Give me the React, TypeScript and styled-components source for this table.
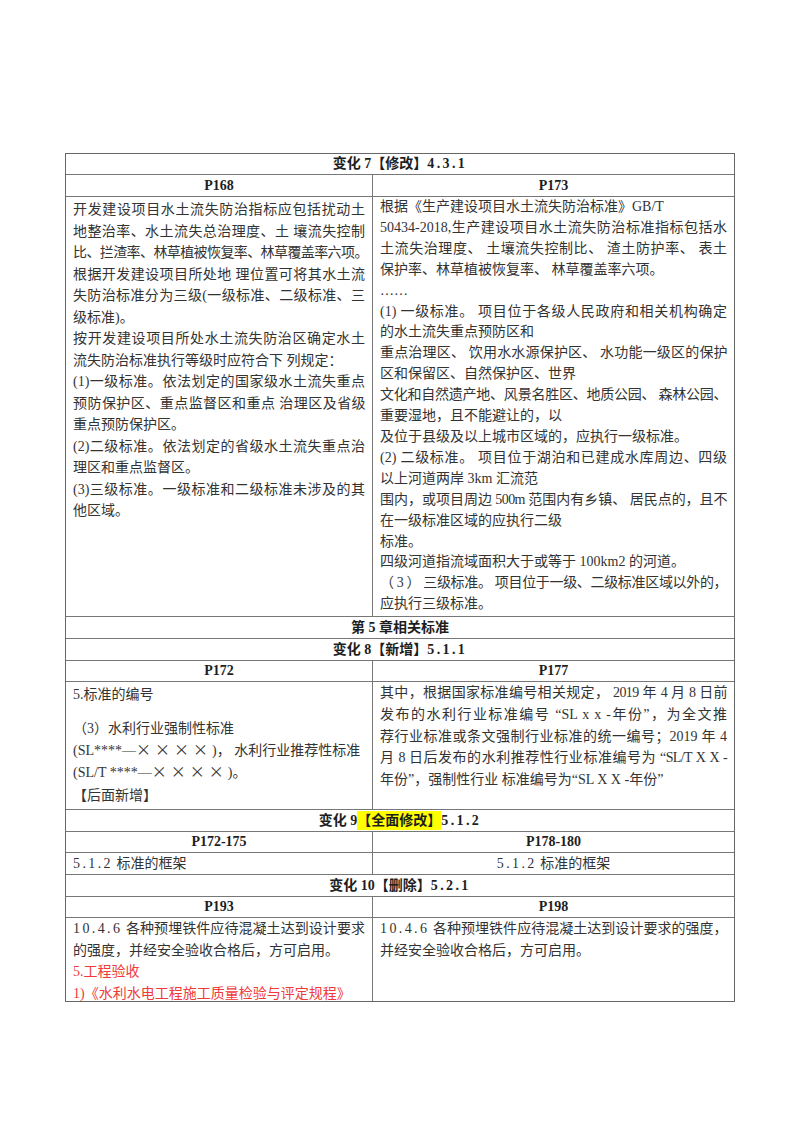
import React from 'react';
import styled, { createGlobalStyle } from 'styled-components';

const GlobalStyle = createGlobalStyle`
  html, body {
    margin: 0;
    padding: 0;
    background: #ffffff;
  }
  body {
    font-family: 'Liberation Serif', 'Noto Sans CJK SC', serif;
    color: #333333;
    font-size: 14px;
  }
`;

const Page = styled.div`
  width: 800px;
  height: 1132px;
  box-sizing: border-box;
  padding: 153px 0 0 65px;
`;

const Table = styled.div`
  width: 670px;
  box-sizing: border-box;
  border: 1px solid #666666;
`;

const Row = styled.div<{ $h: number; $first?: boolean }>`
  display: grid;
  grid-template-columns: 306px 1fr;
  height: ${(p) => p.$h}px;
  border-top: ${(p) => (p.$first ? 'none' : '1px solid #777777')};
`;

const SpanRow = styled.div<{ $h: number; $first?: boolean }>`
  height: ${(p) => p.$h}px;
  line-height: ${(p) => p.$h}px;
  border-top: ${(p) => (p.$first ? 'none' : '1px solid #777777')};
  text-align: center;
  font-weight: 700;
  color: #1e1e1e;
  white-space: nowrap;
`;

const HeadCell = styled.div<{ $right?: boolean }>`
  text-align: center;
  font-weight: 700;
  color: #1e1e1e;
  display: flex;
  align-items: center;
  justify-content: center;
  border-left: ${(p) => (p.$right ? '1px solid #777777' : 'none')};
`;

const Cell = styled.div<{ $right?: boolean; $pt?: number; $lh?: number; $center?: boolean }>`
  padding: ${(p) => p.$pt ?? 0}px 7px 0 7px;
  line-height: ${(p) => p.$lh ?? 21.5}px;
  border-left: ${(p) => (p.$right ? '1px solid #777777' : 'none')};
  text-align: ${(p) => (p.$center ? 'center' : 'left')};
  overflow: hidden;
`;

const Line = styled.div<{ $fill?: boolean; $tight?: boolean; $red?: boolean; $mt?: number }>`
  white-space: nowrap;
  text-align: ${(p) => (p.$fill ? 'justify' : 'inherit')};
  text-align-last: ${(p) => (p.$fill ? 'justify' : 'auto')};
  letter-spacing: ${(p) => (p.$tight ? '-0.6px' : 'normal')};
  color: ${(p) => (p.$red ? '#f03a3a' : 'inherit')};
  margin-top: ${(p) => p.$mt ?? 0}px;
`;

const Mark = styled.span`
  background: #ffff00;
  display: inline-block;
  line-height: 19px;
`;

const Num = styled.span`
  letter-spacing: 2.4px;
`;

// full-width multiplication signs
const Wide = styled.span`
  font-family: 'Noto Sans CJK SC', sans-serif;
  font-size: 15px;
  line-height: 14px;
  letter-spacing: 4px;
`;

type L = { t: React.ReactNode; fill?: boolean; tight?: boolean; red?: boolean; mt?: number };

const left1: L[] = [
  { t: '开发建设项目水土流失防治指标应包括扰动土', fill: true },
  { t: '地整治率、水土流失总治理度、土 壤流失控制', fill: true },
  { t: '比、拦渣率、林草植被恢复率、林草覆盖率六项。', fill: true, tight: true },
  { t: '根据开发建设项目所处地 理位置可将其水土流', fill: true },
  { t: '失防治标准分为三级(一级标准、二级标准、三', fill: true },
  { t: '级标准)。' },
  { t: '按开发建设项目所处水土流失防治区确定水土', fill: true },
  { t: '流失防治标准执行等级时应符合下 列规定：' },
  { t: '(1)一级标准。依法划定的国家级水土流失重点', fill: true },
  { t: '预防保护区、重点监督区和重点 治理区及省级', fill: true, tight: true },
  { t: '重点预防保护区。' },
  { t: '(2)二级标准。依法划定的省级水土流失重点治', fill: true },
  { t: '理区和重点监督区。' },
  { t: '(3)三级标准。一级标准和二级标准未涉及的其', fill: true },
  { t: '他区域。' },
];

const right1: L[] = [
  { t: '根据《生产建设项目水土流失防治标准》GB/T' },
  { t: '50434-2018,生产建设项目水土流失防治标准指标包括水', fill: true },
  { t: '土流失治理度、 土壤流失控制比、 渣土防护率、 表土', fill: true },
  { t: '保护率、林草植被恢复率、 林草覆盖率六项。' },
  { t: '……' },
  { t: '(1) 一级标准。 项目位于各级人民政府和相关机构确定', fill: true },
  { t: '的水土流失重点预防区和' },
  { t: '重点治理区、 饮用水水源保护区、 水功能一级区的保护', fill: true, tight: true },
  { t: '区和保留区、自然保护区、世界' },
  { t: '文化和自然遗产地、风景名胜区、地质公园、 森林公园、', fill: true, tight: true },
  { t: '重要湿地，且不能避让的，以' },
  { t: '及位于县级及以上城市区域的，应执行一级标准。' },
  { t: '(2) 二级标准。 项目位于湖泊和已建成水库周边、四级', fill: true },
  { t: '以上河道两岸 3km 汇流范' },
  { t: '围内，或项目周边 500m 范围内有乡镇、 居民点的，且不', fill: true, tight: true },
  { t: '在一级标准区域的应执行二级' },
  { t: '标准。' },
  { t: '四级河道指流域面积大于或等于 100km2 的河道。' },
  { t: '（ 3 ） 三级标准。 项目位于一级、二级标准区域以外的，', fill: true, tight: true },
  { t: '应执行三级标准。' },
];

const left2: L[] = [
  { t: '5.标准的编号' },
  { t: '（3）水利行业强制性标准', mt: 12 },
  {
    t: (
      <>
        (SL****—<Wide>××××</Wide>)， 水利行业推荐性标准
      </>
    ),
  },
  {
    t: (
      <>
        (SL/T ****—<Wide>××××</Wide>)。
      </>
    ),
  },
  { t: '【后面新增】', mt: 1 },
];

const right2: L[] = [
  { t: '其中，根据国家标准编号相关规定， 2019 年 4 月 8 日前', fill: true, tight: true },
  { t: '发布的水利行业标准编号 “SL x x -年份”，为全文推', fill: true },
  { t: '荐行业标准或条文强制行业标准的统一编号；2019 年 4', fill: true },
  { t: '月 8 日后发布的水利推荐性行业标准编号为 “SL/T X X -', fill: true, tight: true },
  { t: '年份”，强制性行业 标准编号为“SL X X -年份”' },
];

const left3: L[] = [
  {
    t: (
      <>
        <Num>10.4.6</Num> 各种预埋铁件应待混凝土达到设计要求
      </>
    ),
    fill: true,
  },
  { t: '的强度，并经安全验收合格后，方可启用。' },
  { t: '5.工程验收', red: true },
  { t: '1)《水利水电工程施工质量检验与评定规程》', red: true },
];

const right3: L[] = [
  {
    t: (
      <>
        <Num>10.4.6</Num> 各种预埋铁件应待混凝土达到设计要求的强度，
      </>
    ),
    fill: true,
    tight: true,
  },
  { t: '并经安全验收合格后，方可启用。' },
];

const Lines = ({ items }: { items: L[] }) => (
  <>
    {items.map((l, i) => (
      <Line key={i} $fill={l.fill} $tight={l.tight} $red={l.red} $mt={l.mt}>
        {l.t}
      </Line>
    ))}
  </>
);

export default function App() {
  return (
    <Page>
      <GlobalStyle />
      <Table>
        <SpanRow $h={20} $first>
          变化 7【修改】<Num>4.3.1</Num>
        </SpanRow>
        <Row $h={21}>
          <HeadCell>P168</HeadCell>
          <HeadCell $right>P173</HeadCell>
        </Row>
        <Row $h={419}>
          <Cell $pt={2} $lh={21.5}>
            <Lines items={left1} />
          </Cell>
          <Cell $right $pt={0} $lh={20.9}>
            <Lines items={right1} />
          </Cell>
        </Row>
        <SpanRow $h={21}>第 5 章相关标准</SpanRow>
        <SpanRow $h={21}>
          变化 8【新增】<Num>5.1.1</Num>
        </SpanRow>
        <Row $h={20}>
          <HeadCell>P172</HeadCell>
          <HeadCell $right>P177</HeadCell>
        </Row>
        <Row $h={127}>
          <Cell $pt={2} $lh={22}>
            <Lines items={left2} />
          </Cell>
          <Cell $right $pt={0} $lh={21.8}>
            <Lines items={right2} />
          </Cell>
        </Row>
        <SpanRow $h={21}>
          变化 9<Mark>【全面修改】</Mark>
          <Num>5.1.2</Num>
        </SpanRow>
        <Row $h={20}>
          <HeadCell>P172-175</HeadCell>
          <HeadCell $right>P178-180</HeadCell>
        </Row>
        <Row $h={21}>
          <Cell $lh={21}>
            <Num>5.1.2</Num> 标准的框架
          </Cell>
          <Cell $right $lh={21} $center>
            <Num>5.1.2</Num> 标准的框架
          </Cell>
        </Row>
        <SpanRow $h={21}>
          变化 10【删除】<Num>5.2.1</Num>
        </SpanRow>
        <Row $h={20}>
          <HeadCell>P193</HeadCell>
          <HeadCell $right>P198</HeadCell>
        </Row>
        <Row $h={83}>
          <Cell $pt={0} $lh={21.5}>
            <Lines items={left3} />
          </Cell>
          <Cell $right $pt={0} $lh={21.5}>
            <Lines items={right3} />
          </Cell>
        </Row>
      </Table>
    </Page>
  );
}
